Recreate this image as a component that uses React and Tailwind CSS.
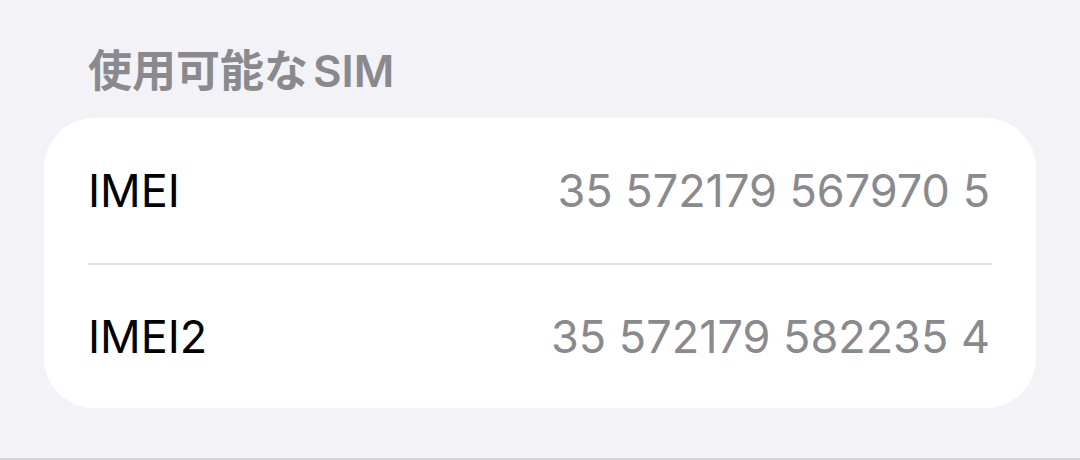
const rows = [
  { label: "IMEI", value: "35 572179 567970 5" },
  { label: "IMEI2", value: "35 572179 582235 4" },
];

export default function App() {
  return (
    <div
      className="w-[1080px] h-[460px] bg-[#f2f2f7] flex flex-col border-b-[2px] border-[#d1d1d6]"
      style={{ fontFamily: 'Inter, "Noto Sans CJK JP", sans-serif' }}
    >
      <div className="h-[118px] pl-[88px] pt-[44px] text-[44px] leading-[54px] font-semibold text-[#8a8a8e]">
        使用可能な<span className="ml-[5px]">SIM</span>
      </div>
      <div className="mx-[44px] bg-white rounded-[50px] px-[44px]">
        {rows.map((row, i) => (
          <div
            key={row.label}
            className={
              "h-[145px] flex items-center justify-between pr-[2px] " +
              (i > 0 ? "border-t-[2px] border-[#e3e3e6]" : "")
            }
          >
            <span className="text-[45px] text-black">{row.label}</span>
            <span className="text-[45px] text-[#8a8a8e]">{row.value}</span>
          </div>
        ))}
      </div>
    </div>
  );
}
